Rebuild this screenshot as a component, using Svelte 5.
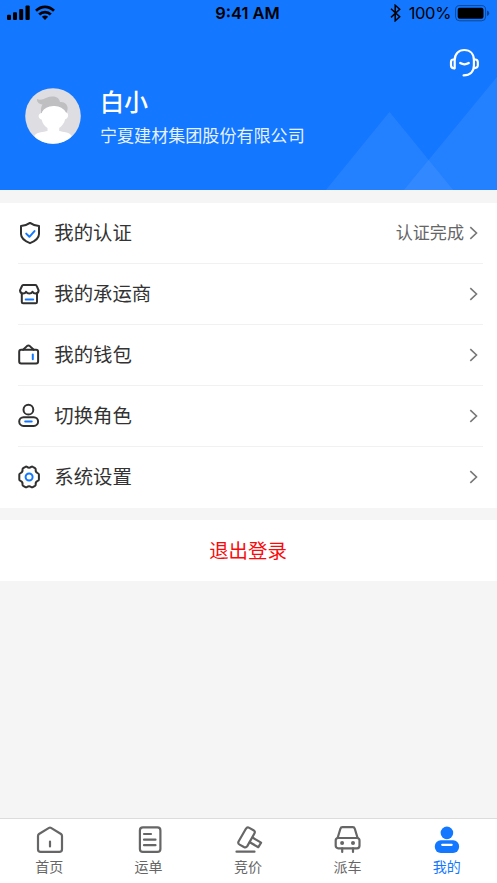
<script>
  const rows = [
    { icon: 'shield', label: '我的认证', value: '认证完成' },
    { icon: 'shop', label: '我的承运商' },
    { icon: 'wallet', label: '我的钱包' },
    { icon: 'role', label: '切换角色' },
    { icon: 'gear', label: '系统设置' }
  ];
  const tabs = [
    { icon: 'home', label: '首页' },
    { icon: 'order', label: '运单' },
    { icon: 'bid', label: '竞价' },
    { icon: 'car', label: '派车' },
    { icon: 'me', label: '我的', active: true }
  ];
</script>

<div class="page">
  <header>
    <svg class="hills" width="171" height="113" viewBox="0 0 171 113">
      <path d="M0 113 63.5 35 127 113Z" />
      <path d="M78 113 171 0V113Z" />
    </svg>
    <div class="status">
      <svg class="signal" width="50" height="16" viewBox="0 0 50 16">
        <rect x="0" y="9.8" width="4" height="5.2" rx="1" />
        <rect x="6" y="7.2" width="4" height="7.8" rx="1" />
        <rect x="12.2" y="4" width="4" height="11" rx="1" />
        <rect x="18.5" y="0.6" width="4.2" height="14.4" rx="1" />
        <g fill="none" stroke="#000" stroke-width="2.7">
          <path d="M29 5.8C34.3.6 41.7.6 47 5.8" />
          <path d="M32.2 9.5C35.5 6.2 40.5 6.2 43.8 9.5" />
        </g>
        <path d="M34.9 11.7Q38 9.2 41.1 11.7L38 15Z" />
      </svg>
      <strong>9:41 AM</strong>
      <div class="power">
        <svg width="12" height="18" viewBox="0 0 12 18" fill="none" stroke="#000" stroke-width="1.5">
          <path d="m1 4.7 8.700 8.100L5.200 16.800V1.300l4.500 4L1 13.400" />
        </svg>
        <span>100%</span>
        <svg class="battery" width="35" height="17" viewBox="0 0 35 17">
          <rect x=".6" y=".6" width="30" height="15.200" rx="4" fill="none" stroke="#000" stroke-opacity=".4" />
          <rect x="2.700" y="2.700" width="25.800" height="11" rx="2" />
          <path d="M32 5.500q2.200.8 2.200 2.800T32 11Z" fill-opacity=".45" />
        </svg>
      </div>
    </div>
    <svg class="service" width="31" height="30" viewBox="0 0 31 30" fill="none" stroke="#fff" stroke-width="2.200">
      <path d="M5.700 20.300V12C5.700 5.800 9.600 2 15.300 2s9.600 3.800 9.600 10v5.500c0 6-3.700 9.900-10.300 9.900" stroke-linecap="round" />
      <path d="M5.700 11.500H4.500Q2 11.500 2 14v3.500q0 2.800 3.700 2.800M25 11.500h1.200q2.600 0 2.600 2.700v3.300q0 2.500-4.300 2.600" />
      <path d="M11.200 15q4.300 2.600 8.600 0" stroke-linecap="round" />
    </svg>
    <div class="profile">
      <svg class="avatar" width="56" height="56" viewBox="0 0 56 56">
        <defs><clipPath id="face"><circle cx="28" cy="28" r="27.800" /></clipPath></defs>
        <g clip-path="url(#face)">
          <rect width="56" height="56" fill="#dedde1" />
          <path d="M16.500 27C15.500 22 16 18.500 17.500 16.500 13.500 15.800 11.800 14 12 11c3.500 1.700 6 .1 9.500-1.300C27 7.400 34 8 35 14c4.500-.5 8 2.500 7.600 7L41.200 27Z" fill="#bfbec1" />
          <path d="M17 24q3-5.500 11.500-6T41 24.500c3 .3 3 5.700-.8 6.700-1 4.500-3.500 6.800-6 8.800v3c4 1.200 9.300.5 12.300 4.500V56H9.500v-8.500c3-4 9-3.300 13-4.500v-3c-3-2-5-4.500-5.900-8.500-4-1-4-6.500.4-6.500Z" fill="#fff" />
        </g>
      </svg>
      <div class="who">
        <h1>白小</h1>
        <p>宁夏建材集团股份有限公司</p>
      </div>
    </div>
  </header>

  <main>
    <section class="menu">
      {#each rows as row}
        <div class="row">
          <svg class="row-icon" width="24" height="26" viewBox="0 0 24 26">
            {#if row.icon === 'shield'}
              <path d="M12 2.900Q16 5.700 21 6.100V14q0 5.500-9 9.200Q3 19.500 3 14V6.100Q8 5.700 12 2.900Z" />
              <path class="blue" d="m8.200 13.600 3.200 3.200 5.100-5.700" />
            {:else if row.icon === 'shop'}
              <path d="M5.300 4.100H17.500q1 0 1.300 1L20.600 9.400q-.2 3-3 3-2.200 0-3.100-1.700-1 1.700-3.200 1.700T8.100 10.700Q7.200 12.400 5 12.400 2.200 12.400 2 9.400L4 5q.3-.9 1.300-.9ZM3.800 12.300V21q0 1.300 1.300 1.300h12.600q1.300 0 1.300-1.300V12.300" />
              <path class="blue" d="M7.700 18.400h7.500" />
            {:else if row.icon === 'wallet'}
              <rect x="1.200" y="7.800" width="18.900" height="13.800" rx="2" />
              <path d="m5.100 7.800 4.100-3.900q1.200-.9 2.400 0l4.100 3.900" />
              <path class="blue" d="M14.800 12.500v4.700" />
            {:else if row.icon === 'role'}
              <circle cx="10.400" cy="6.700" r="4.900" />
              <rect x="1.200" y="14.200" width="18.900" height="8.700" rx="4.350" />
              <path class="blue" d="M7.200 18.600h6.500" />
            {:else}
              <path d="M9 2.900q2 1.600 4.200 0 .8-.6 1.600-.1l2.200 1.300q.9.600.7 1.600-.4 2.500 2 3.400 1.200.4 1.200 1.400v5q0 1-1.200 1.400-2.400.9-2 3.400.2 1-.7 1.600l-2.200 1.200q-.8.500-1.600-.1-2.200-1.600-4.200 0-.8.600-1.600.1l-2.200-1.200q-.9-.6-.7-1.600.4-2.500-2-3.400-1.200-.4-1.200-1.400v-5q0-1 1.200-1.400 2.400-.9 2-3.400-.2-1 .7-1.600l2.200-1.300Q8.200 2.300 9 2.900Z" />
              <circle class="blue" cx="11.100" cy="13" r="3.500" />
            {/if}
          </svg>
          <span class="label">{row.label}</span>
          {#if row.value}<span class="value">{row.value}</span>{/if}
          <svg class="chevron" width="9" height="14" viewBox="0 0 9 14"><path d="m1.300 1.200 6.200 5.800-6.200 5.800" /></svg>
        </div>
      {/each}
    </section>
    <button class="logout"><span>退出登录</span></button>
  </main>

  <nav>
    {#each tabs as tab}
      <div class="tab" class:active={tab.active}>
        <svg width="30" height="30" viewBox="0 0 30 30">
          {#if tab.icon === 'home'}
            <path d="M3 12q0-1.300 1-2L14 3.900q1-.6 2 0L26 10q1 .7 1 2v13.200q0 2.700-2.700 2.700H5.700Q3 27.900 3 25.200ZM15 17.500v5" />
          {:else if tab.icon === 'order'}
            <rect x="5.900" y="3.400" width="20.500" height="24.500" rx="3" />
            <path d="M10 10h7M10 15.700h11.500M10 21.200h11.500" />
          {:else if tab.icon === 'bid'}
            <path d="m4.700 17.300 7.200-12.500q1.300-2.100 3.400-.9l4.200 2.300q2.100 1.200.9 3.300l-7.100 12.600q-1.300 2-3.400.9L5.600 20.600q-2.100-1.200-.9-3.300Z" />
            <path d="m18.600 13.600 8.500 5-2.800 4.600-8.500-4.900M2.500 27.700h18" />
          {:else if tab.icon === 'car'}
            <path d="m4.600 14 2.800-9.200q.5-1.700 2-1.700h10.400q1.500 0 2 1.700l2.800 9.200" />
            <rect x="2.700" y="14" width="23.800" height="10.300" rx="2.500" />
            <path d="M9.200 24.300v3.700M20 24.300v3.700" />
            <circle class="dot" cx="9.100" cy="18.900" r="2" /><circle class="dot" cx="20" cy="18.900" r="2" />
          {:else}
            <circle class="solid" cx="14.900" cy="8.900" r="6.300" />
            <rect class="solid" x="2.800" y="16.300" width="24.300" height="12.700" rx="6" />
            <path class="slot" d="M10.200 20.800h9.500" />
          {/if}
        </svg>
        <span>{tab.label}</span>
      </div>
    {/each}
  </nav>
</div>

<style>
  .page {
    width: 497px;
    height: 883px;
    display: flex;
    flex-direction: column;
    overflow: hidden;
    background: #f5f5f5;
    color: #333;
    font-family: "Noto Sans CJK SC", sans-serif;
  }
  svg { display: block; flex: none; }
  header { position: relative; height: 190px; flex: none; background: #1378ff; color: #fff; }
  .hills { position: absolute; right: 0; bottom: 0; fill: rgba(255, 255, 255, .07); }
  .status {
    height: 26px;
    display: grid;
    grid-template-columns: 1fr auto 1fr;
    align-items: center;
    padding: 0 7px;
    color: #000;
    font: 16.5px/26px Inter, "Liberation Sans", sans-serif;
  }
  .status strong { font-weight: 600; margin-right: 2px; }
  .power { display: flex; align-items: center; justify-content: flex-end; }
  .power span { margin: 0 4px 0 7px; letter-spacing: -.35px; }
  .service { position: absolute; left: 449px; top: 48px; }
  .profile { display: flex; margin: 62px 0 0 25px; }
  .who { margin: -4px 0 0 19px; }
  h1 { margin: 0; font-size: 24px; line-height: 34px; font-weight: 500; }
  p { margin: 4px 0 0; font-size: 17.07px; line-height: 26px; font-weight: 400; color: rgba(255, 255, 255, .92); }
  main { flex: 1; display: flex; flex-direction: column; }
  .menu { margin-top: 12.5px; background: #fff; }
  .row {
    height: 61.2px;
    box-sizing: border-box;
    margin: 0 14px 0 18px;
    padding-right: 5px;
    display: flex;
    align-items: center;
    border-bottom: 1px solid #f1f1f1;
  }
  .row:last-child { border-bottom-color: transparent; }
  .row-icon { fill: none; stroke: #303030; stroke-width: 2; stroke-linejoin: round; stroke-linecap: round; }
  .blue { stroke: #1378ff; stroke-width: 2; }
  .label { margin-left: 12.3px; padding-bottom: 2px; flex: 1; font-size: 19.4px; line-height: 28px; }
  .value { margin-right: 5px; padding-bottom: 1px; font-size: 17.07px; line-height: 26px; color: #666; }
  .chevron { fill: none; stroke: #777; stroke-width: 1.6; }
  .logout {
    margin: 12px 0 0;
    padding: 0 1px 2px 0;
    height: 60.5px;
    border: 0;
    background: #fff;
    color: #f90a0a;
    font: 19.4px/28px "Noto Sans CJK SC", sans-serif;
  }
  nav { height: 65px; flex: none; box-sizing: border-box; border-top: 1px solid #dcdcdc; background: #fff; display: flex; }
  .tab { flex: 1; display: flex; flex-direction: column; align-items: center; padding-top: 5px; color: #666; font-size: 14px; line-height: 20px; }
  .tab svg { fill: none; stroke: #666; stroke-width: 2.2; stroke-linejoin: round; stroke-linecap: round; }
  .tab span { margin: 2.4px 1px 0 0; }
  .active { color: #1378ff; }
  .tab .dot { fill: #666; stroke: none; }
  .tab .solid { fill: #1378ff; stroke: none; }
  .tab .slot { stroke: #fff; }
</style>
